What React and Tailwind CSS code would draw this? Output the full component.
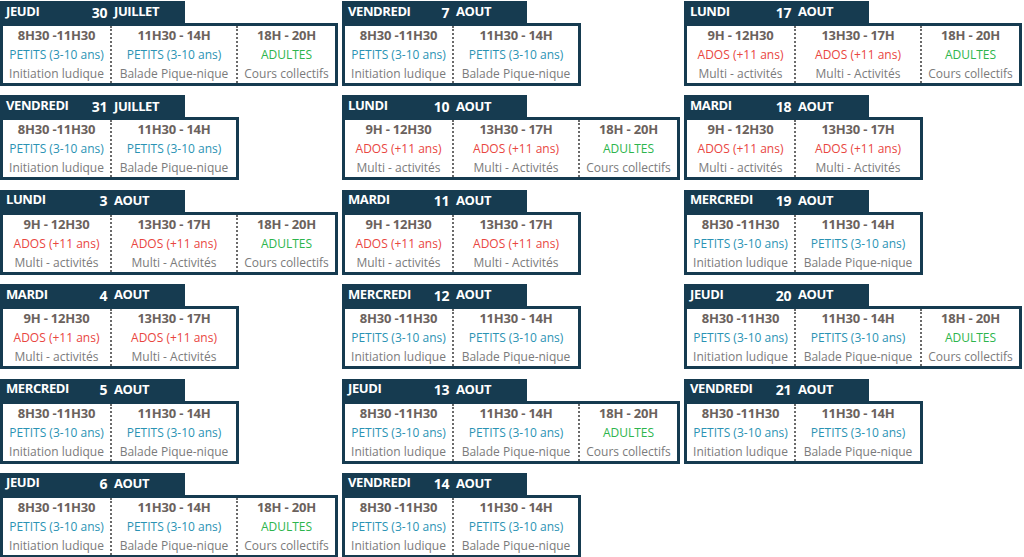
import React from "react"

const slots = {
  p1: { time: "8H30 -11H30", who: "PETITS (3-10 ans)", what: "Initiation ludique", color: "text-[#2b93b4]" },
  p2: { time: "11H30 - 14H", who: "PETITS (3-10 ans)", what: "Balade Pique-nique", color: "text-[#2b93b4]" },
  ad: { time: "18H - 20H", who: "ADULTES", what: "Cours collectifs", color: "text-[#2db54c]" },
  d1: { time: "9H - 12H30", who: "ADOS (+11 ans)", what: "Multi - activités", color: "text-[#e9463f]" },
  d2: { time: "13H30 - 17H", who: "ADOS (+11 ans)", what: "Multi - Activités", color: "text-[#e9463f]" },
}

const columns = [
  [
    ["JEUDI", "30", "JUILLET", ["p1", "p2", "ad"]],
    ["VENDREDI", "31", "JUILLET", ["p1", "p2"]],
    ["LUNDI", "3", "AOUT", ["d1", "d2", "ad"]],
    ["MARDI", "4", "AOUT", ["d1", "d2"]],
    ["MERCREDI", "5", "AOUT", ["p1", "p2"]],
    ["JEUDI", "6", "AOUT", ["p1", "p2", "ad"]],
  ],
  [
    ["VENDREDI", "7", "AOUT", ["p1", "p2"]],
    ["LUNDI", "10", "AOUT", ["d1", "d2", "ad"]],
    ["MARDI", "11", "AOUT", ["d1", "d2"]],
    ["MERCREDI", "12", "AOUT", ["p1", "p2"]],
    ["JEUDI", "13", "AOUT", ["p1", "p2", "ad"]],
    ["VENDREDI", "14", "AOUT", ["p1", "p2"]],
  ],
  [
    ["LUNDI", "17", "AOUT", ["d1", "d2", "ad"]],
    ["MARDI", "18", "AOUT", ["d1", "d2"]],
    ["MERCREDI", "19", "AOUT", ["p1", "p2"]],
    ["JEUDI", "20", "AOUT", ["p1", "p2", "ad"]],
    ["VENDREDI", "21", "AOUT", ["p1", "p2"]],
  ],
]

const widths = ["w-[107px]", "w-[126px]", "w-[99px]"]

function Cell({ slot, index }) {
  const s = slots[slot]
  return (
    <div
      className={`${widths[index]} flex flex-col items-center text-[12px] leading-[19px] whitespace-nowrap ${
        index > 0 ? "border-l-2 border-dotted border-[#6a6a6a]" : ""
      }`}
    >
      <span className="font-bold text-[13px] tracking-[-0.2px] text-[#6b625d]">{s.time}</span>
      <span className={s.color}>{s.who}</span>
      <span className="text-[#7b7b7b]">{s.what}</span>
    </div>
  )
}

function Day({ day, num, month, cells }) {
  return (
    <div className="flex flex-col items-start">
      <div className="w-[185px] h-[22px] bg-[#163b50] flex items-center text-white font-bold text-[13px] tracking-[-0.4px]">
        <div className="w-[109px] flex justify-between pl-[6px] pr-[2px]">
          <span>{day}</span>
          <span className="text-[14px]">{num}</span>
        </div>
        <span className="pl-[5px]">{month}</span>
      </div>
      <div className="flex border-[3px] border-[#163b50] bg-white">
        {cells.map((c, i) => (
          <Cell key={i} slot={c} index={i} />
        ))}
      </div>
    </div>
  )
}

export default function App() {
  return (
    <div
      className="w-[1024px] h-[557px] overflow-hidden bg-white pt-[1px] grid grid-cols-[342px_342px_340px]"
      style={{ fontFamily: '"Open Sans", "Noto Sans", sans-serif' }}
    >
      {columns.map((col, ci) => (
        <div key={ci} className="flex flex-col gap-[9.4px]">
          {col.map((d, i) => (
            <Day key={i} day={d[0]} num={d[1]} month={d[2]} cells={d[3]} />
          ))}
        </div>
      ))}
    </div>
  )
}
